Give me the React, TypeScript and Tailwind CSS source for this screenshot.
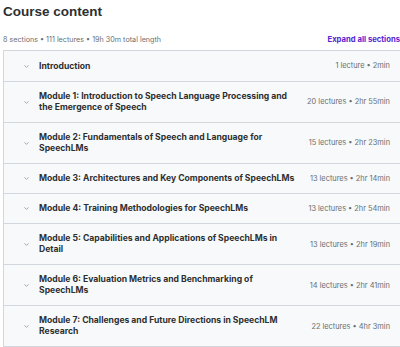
import { ChevronDown } from "lucide-react"

const SECTIONS = [
  { title: "Introduction", meta: "1 lecture • 2min" },
  { title: "Module 1: Introduction to Speech Language Processing and the Emergence of Speech", meta: "20 lectures • 2hr 55min" },
  { title: "Module 2: Fundamentals of Speech and Language for SpeechLMs", meta: "15 lectures • 2hr 23min" },
  { title: "Module 3: Architectures and Key Components of SpeechLMs", meta: "13 lectures • 2hr 14min" },
  { title: "Module 4: Training Methodologies for SpeechLMs", meta: "13 lectures • 2hr 54min" },
  { title: "Module 5: Capabilities and Applications of SpeechLMs in Detail", meta: "13 lectures • 2hr 19min" },
  { title: "Module 6: Evaluation Metrics and Benchmarking of SpeechLMs", meta: "14 lectures • 2hr 41min" },
  { title: "Module 7: Challenges and Future Directions in SpeechLM Research", meta: "22 lectures • 4hr 3min" },
]

export default function App() {
  return (
    <div className="w-[400px] h-[347px] overflow-hidden bg-white pl-[3px] font-['Inter',sans-serif] text-[#2d2f31]">
      <h2 className="pt-[4px] font-['Liberation_Sans',Arial,sans-serif] text-[13.5px] font-bold leading-[16px]">
        Course content
      </h2>

      <div className="mt-[15px] flex items-center justify-between">
        <span className="text-[7.2px] leading-[10px] text-[#6a6f73]">8 sections • 111 lectures • 19h 30m total length</span>
        <span className="text-[7.7px] font-bold leading-[10px] text-[#5624d0] whitespace-nowrap">Expand all sections</span>
      </div>

      <div className="mt-[5px] w-[400px] border border-r-0 border-[#d1d7dc]">
        {SECTIONS.map((s, i) => (
          <div
            key={s.title}
            className={
              "flex min-h-[30px] items-center bg-[#f7f9fa] py-[9px] pl-[19px] pr-[13px] " +
              (i > 0 ? "border-t border-[#d1d7dc]" : "")
            }
          >
            <ChevronDown size={7} strokeWidth={2} className="shrink-0 text-[#6a6f73]" />
            <div className="ml-[9px] w-[258px] text-[8.6px] font-bold leading-[11px]">{s.title}</div>
            <div className="ml-auto text-[7.4px] text-[#6a6f73] whitespace-nowrap">{s.meta}</div>
          </div>
        ))}
      </div>
    </div>
  )
}
